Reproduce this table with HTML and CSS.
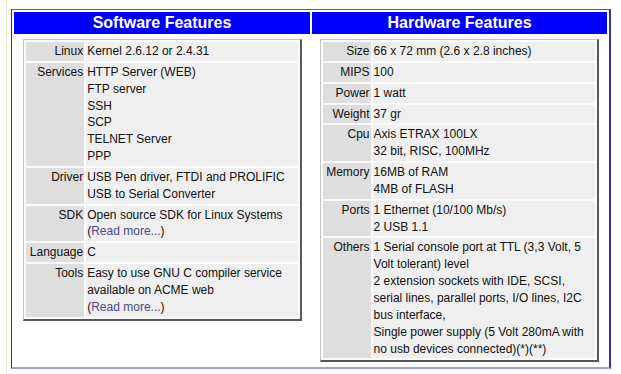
FILE: index.html
```html
<!DOCTYPE html>
<html>
<head>
<meta charset="utf-8">
<title>Features</title>
<link rel="stylesheet" href="styles.css">
</head>
<body>
<div class="page">
  <table class="features">
    <tr>
      <th class="head head-left">Software Features</th>
      <th class="head head-right">Hardware Features</th>
    </tr>
    <tr>
      <td class="panel">
        <table class="specs">
          <tr><td class="label">Linux</td><td class="value">Kernel 2.6.12 or 2.4.31</td></tr>
          <tr><td class="label">Services</td><td class="value">HTTP Server (WEB)<br>FTP server<br>SSH<br>SCP<br>TELNET Server<br>PPP</td></tr>
          <tr><td class="label">Driver</td><td class="value">USB Pen driver, FTDI and PROLIFIC<br>USB to Serial Converter</td></tr>
          <tr><td class="label">SDK</td><td class="value">Open source SDK for Linux Systems<br>(<a class="more" href="#">Read more...</a>)</td></tr>
          <tr><td class="label">Language</td><td class="value">C</td></tr>
          <tr><td class="label">Tools</td><td class="value">Easy to use GNU C compiler service<br>available on ACME web<br>(<a class="more" href="#">Read more...</a>)</td></tr>
        </table>
      </td>
      <td class="panel">
        <table class="specs">
          <tr><td class="label">Size</td><td class="value">66 x 72 mm (2.6 x 2.8 inches)</td></tr>
          <tr><td class="label">MIPS</td><td class="value">100</td></tr>
          <tr><td class="label">Power</td><td class="value">1 watt</td></tr>
          <tr><td class="label">Weight</td><td class="value">37 gr</td></tr>
          <tr><td class="label">Cpu</td><td class="value">Axis ETRAX 100LX<br>32 bit, RISC, 100MHz</td></tr>
          <tr><td class="label">Memory</td><td class="value">16MB of RAM<br>4MB of FLASH</td></tr>
          <tr><td class="label">Ports</td><td class="value">1 Ethernet (10/100 Mb/s)<br>2 USB 1.1</td></tr>
          <tr><td class="label">Others</td><td class="value">1 Serial console port at TTL (3,3 Volt, 5<br>Volt tolerant) level<br>2 extension sockets with IDE, SCSI,<br>serial lines, parallel ports, I/O lines, I2C<br>bus interface,<br>Single power supply (5 Volt 280mA with<br>no usb devices connected)(*)(**)</td></tr>
        </table>
      </td>
    </tr>
  </table>
</div>
</body>
</html>
```

FILE: styles.css
```css
html, body {
  margin: 0;
  padding: 0;
  background: #ffffff;
}

body {
  font-family: "Liberation Sans", Arial, sans-serif;
  font-size: 12px;
  color: #111111;
}

.page {
  margin-left: 6px;
  border-left: 1px solid #efeedb;
  padding: 9px 0 0 4px;
  min-height: 365px;
}

.features {
  border-collapse: separate;
  border-spacing: 2px;
  table-layout: fixed;
  width: 600px;
  border-left: 1px solid #2e2e7c;
  border-top: 1px solid #5a5aa0;
  border-right: 2px solid #3434a8;
  border-bottom: 2px solid #a0a0dc;
  background: #ffffff;
}

.head {
  background: #0000ff;
  color: #ffffff;
  font-weight: bold;
  font-size: 16px;
  line-height: 22px;
  height: 22px;
  padding: 0;
  text-align: center;
}

.head-left {
  width: 296px;
}

.panel {
  vertical-align: top;
  padding: 3px 0;
}

.specs {
  width: 279px;
  margin: 0 auto;
  border-collapse: separate;
  border-spacing: 2px;
  border-left: 1px solid #c4c4c4;
  border-top: 1px solid #c4c4c4;
  border-right: 2px solid #575757;
  border-bottom: 2px solid #575757;
  background: #fafafa;
}

.specs td {
  padding: 1px 1px;
  line-height: 16.85px;
  vertical-align: top;
}

.label {
  background: #dedede;
  text-align: right;
  white-space: nowrap;
}

.value {
  background: #efefef;
  text-align: left;
}

.more {
  color: #4a4a90;
  text-decoration: none;
}
```
